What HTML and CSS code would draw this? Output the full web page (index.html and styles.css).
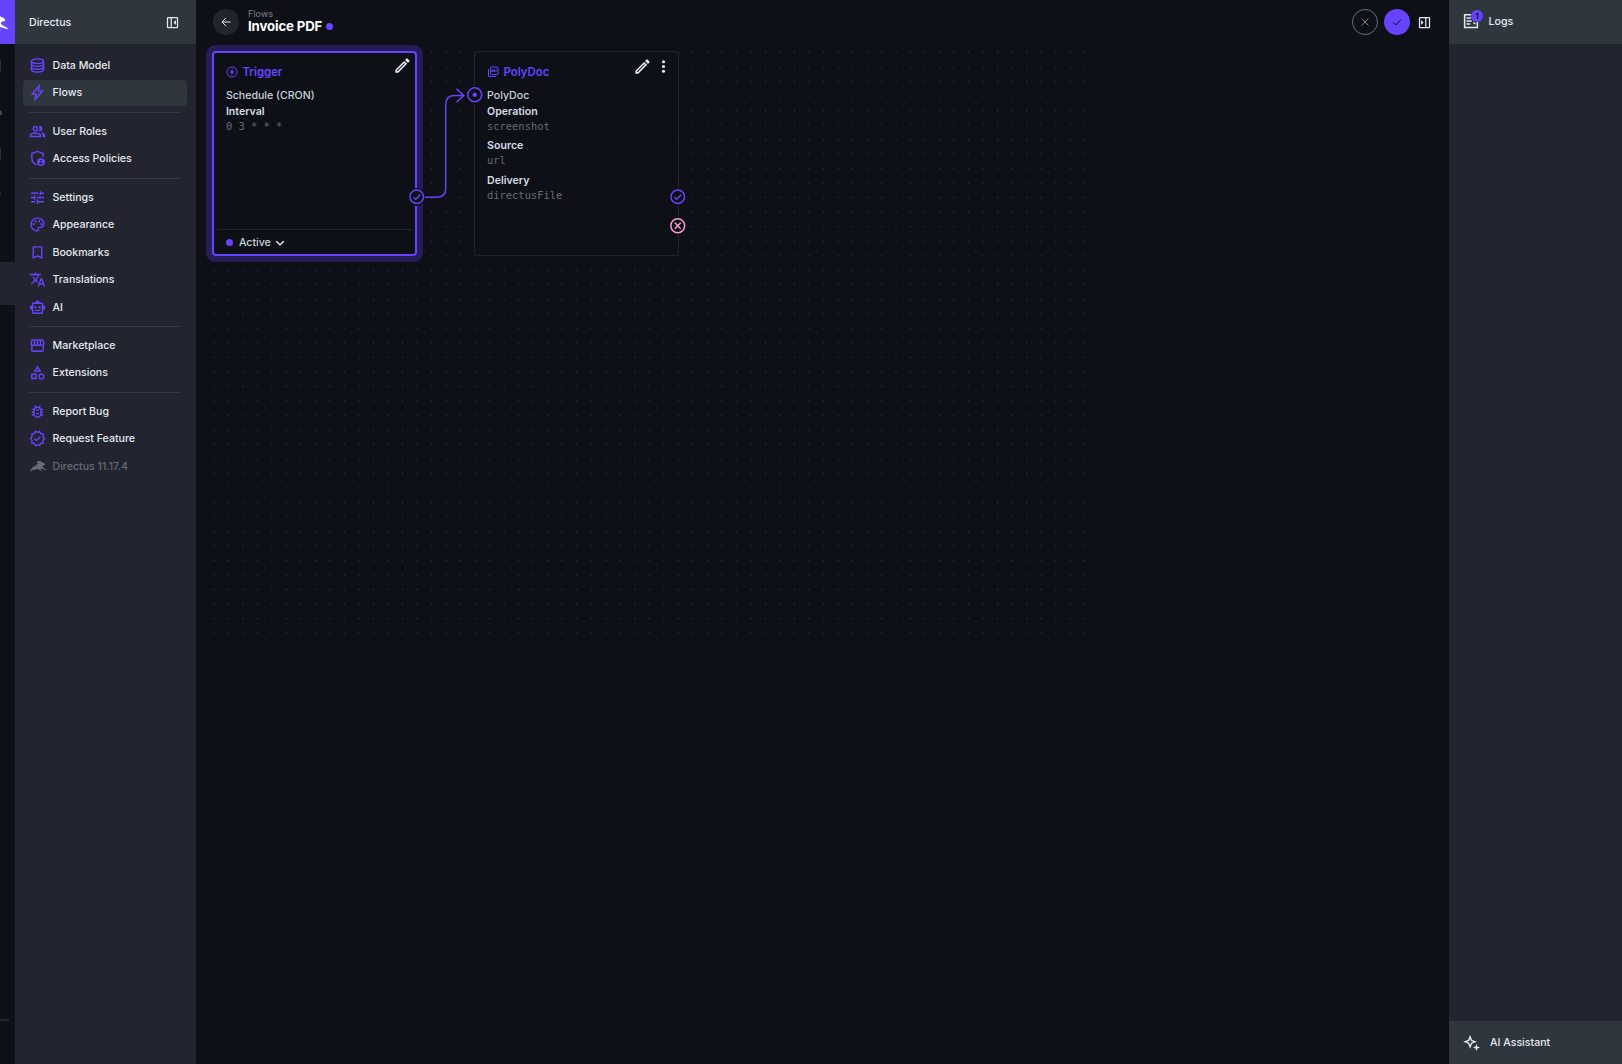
FILE: index.html
```html
<!DOCTYPE html>
<html lang="en">
<head>
    <meta charset="utf-8">
    <title>Invoice PDF</title>
    <link rel="stylesheet" href="styles.css">
</head>
<body>
<!-- shared icons -->
<svg class="defs">
    <symbol id="hare" viewBox="0 0 24 18">
        <path d="M.5 16.500c2-1.400 2.200-3.400 3.800-5.300C5.700 9.500 8 8.600 10.700 8.400L8 6.800c1.800.2 3 .1 4.200-.4L9.800 3.200c2.500-1.600 6-1.200 7.900.8l2.700 1.200c1.300.6 1.400 1.700 1 2.600l-3.200.8c-.1 1.300.2 2 1.200 2.600l4.200 2.300c.6.4.2 1-.6.9l-6-1.700c-1.600-.4-2.400.4-1.600 1.100l2.300 1.600c.4.500-.2.800-.8.600l-4.600-2.600c-1.500-.8-2.600-.5-3.800.3-1.500 1-3.200 0-4.700 1.200-.8.700-2 1.900-3.300 1.600z"/>
    </symbol>
    <symbol id="pencil" viewBox="0 0 24 24">
        <path d="M14.060 9.020l.92.92L5.920 19H5v-.92l9.060-9.060M17.660 3c-.25 0-.51.100-.7.290l-1.830 1.830 3.750 3.750 1.830-1.830c.39-.39.39-1.020 0-1.410l-2.340-2.340c-.2-.2-.45-.29-.71-.29zm-3.600 3.190L3 17.250V21h3.750L17.810 9.940l-3.750-3.750z"/>
    </symbol>
    <symbol id="accepted" viewBox="0 0 24 24">
        <circle class="line" cx="12" cy="12" r="9.300"/>
        <path class="line" d="M7.500 12.500l3 3 6.200-6.300"/>
    </symbol>
</svg>

<div class="app">
    <div class="modules">
        <a class="module logo"><svg><use href="#hare"/></svg></a>
        <a class="module"><svg viewBox="0 0 24 24"><rect class="line" x="3" y="4" width="18" height="17" rx="2"/></svg></a>
        <a class="module"><svg viewBox="0 0 24 24"><path class="line" d="M3 18v-2c3-4 16-4 19.500 0v3z"/></svg></a>
        <a class="module"><svg viewBox="0 0 24 24"><path class="line" d="M3 5h7l2 2h9v13H3z"/></svg></a>
        <a class="module"><svg viewBox="0 0 24 24"><path class="line" d="M3 18l6-6 4 4 9-8"/></svg></a>
        <a class="module blank"></a>
        <a class="module active"></a>
        <div class="modules-end"></div>
    </div>

    <div class="nav">
        <div class="nav-head">
            <span>Directus</span>
            <svg class="icon" viewBox="0 0 24 24"><rect class="line" x="4" y="4" width="16" height="16" rx="1"/><path class="line" d="M10 4v16"/><path d="M17.500 8v8L13.500 12z"/></svg>
        </div>
        <ul class="menu">
            <li>
                <svg class="icon" viewBox="0 0 24 24"><ellipse class="line" cx="12" cy="6" rx="8.500" ry="3.300"/><path class="line" d="M3.500 6v12c0 1.800 3.600 3.200 8.500 3.200s8.500-1.400 8.500-3.200V6M3.500 10c0 1.800 3.600 3.200 8.500 3.200s8.500-1.400 8.500-3.200M3.500 14c0 1.800 3.600 3.200 8.500 3.200s8.500-1.400 8.500-3.200"/></svg>
                Data Model
            </li>
            <li class="current">
                <svg class="icon" viewBox="0 0 24 24"><path class="line" d="M14.500 2.500L4.500 14H10l-1.500 8L19 10h-6z"/></svg>
                Flows
            </li>
            <li class="line-sep"></li>
            <li>
                <svg class="icon" viewBox="0 0 24 24"><path d="M16.670 13.130C18.040 14.060 19 15.320 19 17v3h4v-3c0-2.180-3.570-3.470-6.330-3.870zM15 12c2.210 0 4-1.790 4-4s-1.790-4-4-4c-.47 0-.91.100-1.330.240C14.500 5.270 15 6.580 15 8s-.5 2.730-1.330 3.760c.42.140.86.240 1.330.240zM9 12c2.210 0 4-1.790 4-4s-1.790-4-4-4-4 1.790-4 4 1.790 4 4 4zm0-6c1.100 0 2 .9 2 2s-.9 2-2 2-2-.9-2-2 .9-2 2-2zM9 13c-2.670 0-8 1.340-8 4v3h16v-3c0-2.660-5.330-4-8-4zm6 5H3v-.99C3.200 16.290 6.300 15 9 15s5.800 1.290 6 2v1z"/></svg>
                User Roles
            </li>
            <li>
                <svg class="icon" viewBox="0 0 24 24"><path class="line" d="M20 10V5l-8-3-8 3v6c0 4.700 3 8.800 7 10"/><circle cx="17" cy="17" r="5.500"/><circle class="cut" cx="17" cy="15.300" r="1.400"/><path class="cut" d="M14 19c1-2 5-2 6 0-1.500 1.800-4.500 1.800-6 0z"/></svg>
                Access Policies
            </li>
            <li class="line-sep"></li>
            <li>
                <svg class="icon" viewBox="0 0 24 24"><path d="M3 17v2h6v-2H3zM3 5v2h10V5H3zm10 16v-2h8v-2h-8v-2h-2v6h2zM7 9v2H3v2h4v2h2V9H7zm14 4v-2H11v2h10zm-6-4h2V7h4V5h-4V3h-2v6z"/></svg>
                Settings
            </li>
            <li>
                <svg class="icon" viewBox="0 0 24 24"><path d="M12 22C6.490 22 2 17.510 2 12S6.490 2 12 2s10 4.040 10 9c0 3.310-2.690 6-6 6h-1.770c-.28 0-.5.220-.5.500 0 .120.050.230.130.330.410.470.640 1.060.640 1.670 0 1.380-1.120 2.500-2.500 2.500zm0-18c-4.410 0-8 3.590-8 8s3.590 8 8 8c.28 0 .5-.22.500-.5 0-.16-.08-.28-.14-.35-.41-.46-.63-1.050-.63-1.650 0-1.380 1.120-2.500 2.500-2.500H16c2.210 0 4-1.790 4-4 0-3.860-3.590-7-8-7z"/><circle cx="6.500" cy="11.500" r="1.500"/><circle cx="9.500" cy="7.500" r="1.500"/><circle cx="14.500" cy="7.500" r="1.500"/><circle cx="17.500" cy="11.500" r="1.500"/></svg>
                Appearance
            </li>
            <li>
                <svg class="icon" viewBox="0 0 24 24"><path d="M17 3H7c-1.100 0-2 .9-2 2v16l7-3 7 3V5c0-1.100-.9-2-2-2zm0 15l-5-2.180L7 18V5h10v13z"/></svg>
                Bookmarks
            </li>
            <li>
                <svg class="icon" viewBox="0 0 24 24"><path d="M12.870 15.070l-2.540-2.510.03-.03c1.740-1.940 2.980-4.170 3.710-6.530H17V4h-7V2H8v2H1v1.990h11.170C11.500 7.920 10.440 9.750 9 11.350 8.070 10.320 7.300 9.190 6.690 8h-2c.73 1.630 1.730 3.170 2.980 4.560l-5.090 5.020L4 19l5-5 3.110 3.110.76-2.040zM18.500 10h-2L12 22h2l1.120-3h4.750L21 22h2l-4.500-12zm-2.620 7l1.620-4.330L19.120 17h-3.240z"/></svg>
                Translations
            </li>
            <li>
                <svg class="icon" viewBox="0 0 24 24"><path d="M20 9V7c0-1.100-.9-2-2-2h-3c0-1.660-1.340-3-3-3S9 3.340 9 5H6c-1.100 0-2 .9-2 2v2c-1.660 0-3 1.340-3 3s1.340 3 3 3v4c0 1.100.9 2 2 2h12c1.100 0 2-.9 2-2v-4c1.660 0 3-1.340 3-3s-1.340-3-3-3zm-2 10H6V7h12v12zM9 13c-.83 0-1.500-.67-1.500-1.500S8.170 10 9 10s1.500.67 1.500 1.500S9.830 13 9 13zm7.500-1.500c0 .83-.67 1.500-1.500 1.500s-1.500-.67-1.500-1.500.67-1.500 1.500-1.500 1.500.67 1.500 1.500zM8 15h8v2H8v-2z"/></svg>
                AI
            </li>
            <li class="line-sep"></li>
            <li>
                <svg class="icon" viewBox="0 0 24 24"><path d="M21.900 8.890l-1.050-4.370c-.22-.9-1-1.520-1.910-1.520H5.050c-.9 0-1.690.63-1.900 1.520L2.100 8.890c-.24 1.020-.02 2.060.62 2.880.08.110.19.190.28.290V19c0 1.100.9 2 2 2h14c1.100 0 2-.9 2-2v-6.940c.09-.09.2-.18.280-.28.64-.82.870-1.870.620-2.890zm-2.990-3.900l1.050 4.370c.1.420.01.840-.25 1.170-.14.180-.44.470-.94.470-.61 0-1.140-.49-1.210-1.140L16.980 5l1.930-.01zM13 5h1.960l.54 4.520c.05.390-.07.780-.33 1.070-.22.260-.54.410-.95.410-.67 0-1.220-.59-1.220-1.310V5zM8.490 9.520L9.040 5H11v4.690c0 .72-.55 1.310-1.290 1.310-.34 0-.65-.15-.89-.41-.25-.29-.37-.68-.33-1.070zm-4.450-.16L5.050 5h1.970l-.58 4.860c-.08.650-.6 1.140-1.210 1.140-.49 0-.8-.29-.93-.47-.27-.32-.36-.75-.26-1.170zM5 19v-6.030c.08.010.15.030.23.030.87 0 1.660-.36 2.240-.95.6.6 1.400.95 2.310.95.870 0 1.650-.36 2.230-.93.590.57 1.390.93 2.290.93.840 0 1.640-.35 2.240-.95.580.59 1.370.95 2.240.95.080 0 .15-.02.230-.03V19H5z"/></svg>
                Marketplace
            </li>
            <li>
                <svg class="icon" viewBox="0 0 24 24"><path d="M12 2l-5.500 9h11L12 2zm0 3.840L13.930 9h-3.870L12 5.840zM17.500 13c-2.490 0-4.500 2.010-4.500 4.500s2.010 4.500 4.500 4.500 4.500-2.010 4.500-4.500-2.010-4.500-4.500-4.500zm0 7c-1.380 0-2.500-1.120-2.500-2.500s1.120-2.500 2.500-2.500 2.500 1.120 2.500 2.500-1.120 2.500-2.500 2.500zM3 21.500h8v-8H3v8zm2-6h4v4H5v-4z"/></svg>
                Extensions
            </li>
            <li class="line-sep"></li>
            <li>
                <svg class="icon" viewBox="0 0 24 24"><path d="M20 8h-2.810c-.45-.78-1.070-1.450-1.820-1.960L17 4.410 15.590 3l-2.170 2.170C12.960 5.060 12.490 5 12 5s-.96.060-1.410.17L8.410 3 7 4.410l1.620 1.630C7.880 6.550 7.260 7.220 6.810 8H4v2h2.090c-.05.330-.09.660-.09 1v1H4v2h2v1c0 .34.040.67.090 1H4v2h2.810c1.040 1.790 2.970 3 5.190 3s4.150-1.210 5.190-3H20v-2h-2.090c.05-.33.090-.66.090-1v-1h2v-2h-2v-1c0-.34-.04-.67-.09-1H20V8zm-4 7c0 2.210-1.790 4-4 4s-4-1.790-4-4v-4c0-2.210 1.790-4 4-4s4 1.790 4 4v4z"/><path d="M10 9h4v2h-4zM10 14h4v2h-4z"/></svg>
                Report Bug
            </li>
            <li>
                <svg class="icon" viewBox="0 0 24 24"><path class="line" d="M22 12l-2.300-2.700.3-3.500-3.400-.8-1.800-3L12 3.300 9.200 2 7.400 5 4 5.800l.3 3.500L2 12l2.300 2.700-.3 3.500 3.400.8 1.800 3 2.800-1.300 2.800 1.300 1.800-3 3.400-.8-.3-3.500z"/><path class="line" d="M7.800 12.200l2.900 2.800 5.300-5.400"/></svg>
                Request Feature
            </li>
            <li class="version">
                <svg class="icon hare"><use href="#hare"/></svg>
                Directus 11.17.4
            </li>
        </ul>
    </div>

    <div class="main">
        <div class="header">
            <a class="round back"><svg viewBox="0 0 24 24"><path class="line" d="M21 12H4M12 4l-8 8 8 8"/></svg></a>
            <div class="title">
                <div class="crumb">Flows</div>
                <h1>Invoice PDF <i class="dot"></i></h1>
            </div>
            <a class="round cancel"><svg viewBox="0 0 24 24"><path class="line" d="M5 5l14 14M19 5L5 19"/></svg></a>
            <a class="round save"><svg viewBox="0 0 24 24"><path class="line" d="M4 12.500l5.500 5.500L20 7"/></svg></a>
            <svg class="icon toggle" viewBox="0 0 24 24"><rect class="line" x="4" y="4" width="16" height="16" rx="1"/><path class="line" d="M14 4v16"/><path d="M6.500 8v8l4-4z"/></svg>
        </div>

        <div class="canvas">
            <div class="panel trigger">
                <div class="tools">
                    <svg class="icon"><use href="#pencil"/></svg>
                </div>
                <div class="name">
                    <svg viewBox="0 0 24 24"><circle class="line" cx="12" cy="12" r="10"/><path d="M13 5l-5.500 8.500H11V19l5.500-8.500H13z"/></svg>
                    Trigger
                </div>
                <div class="type">Schedule (CRON)</div>
                <dl>
                    <dt>Interval</dt>
                    <dd>0 3 * * *</dd>
                </dl>
                <div class="status">
                    <i class="dot"></i>Active
                    <svg viewBox="0 0 24 24"><path class="line" d="M3 7.500l9 9 9-9"/></svg>
                </div>
            </div>

            <div class="panel operation">
                <div class="tools">
                    <svg class="icon"><use href="#pencil"/></svg>
                    <svg class="icon" viewBox="0 0 24 24"><circle cx="12" cy="6" r="2"/><circle cx="12" cy="12" r="2"/><circle cx="12" cy="18" r="2"/></svg>
                </div>
                <div class="name">
                    <svg viewBox="0 0 24 24"><rect class="line" x="7" y="2" width="15" height="15" rx="1.500"/><path class="line" d="M3 6v15h15"/><path d="M9 7h3v5H9zM13 7h3v5h-3zM17 7h3v2h-3zM17 10h2v2h-2z"/></svg>
                    PolyDoc
                </div>
                <div class="type">PolyDoc</div>
                <dl>
                    <dt>Operation</dt>
                    <dd>screenshot</dd>
                    <dt>Source</dt>
                    <dd>url</dd>
                    <dt>Delivery</dt>
                    <dd>directusFile</dd>
                </dl>
            </div>

            <svg class="arrow" viewBox="0 0 60 120"><path d="M6 109.300h14q8.700 0 8.700-8.700V16.500q0-9 9-9h8.800M39.500.8l7.300 6.700-7.300 6.800"/></svg>

            <svg class="port port-out"><use href="#accepted"/></svg>
            <svg class="port port-in" viewBox="0 0 24 24"><circle class="line" cx="12" cy="12" r="9.500"/><circle cx="12" cy="12" r="3"/></svg>
            <svg class="port port-resolve"><use href="#accepted"/></svg>
            <svg class="port port-reject" viewBox="0 0 24 24"><circle class="line" cx="12" cy="12" r="9.500"/><path class="line" d="M8 8l8 8M16 8l-8 8"/></svg>
        </div>
    </div>

    <div class="sidebar">
        <div class="section">
            <span class="logs">
                <svg class="icon" viewBox="0 0 24 24"><path class="line" d="M12 3.500H3.500v17h17V13M6 8h6M6 12h7M6 16h5M15 14l3 2"/></svg>
                <b class="badge">1</b>
            </span>
            Logs
        </div>
        <div class="section assistant">
            <svg class="icon" viewBox="0 0 24 24"><path class="line" d="M10 4l2 5 5 2-5 2-2 5-2-5-5-2 5-2z"/><path d="M19 14l1.300 3.700L24 19l-3.700 1.300L19 24l-1.300-3.700L14 19l3.700-1.300z"/></svg>
            AI Assistant
        </div>
    </div>
</div>
</body>
</html>
```

FILE: styles.css
```css
* {
    box-sizing: border-box;
}

body {
    margin: 0;
    background: #0d1117;
    color: #e4e9f0;
    font: 500 10.6px/15px Inter, sans-serif;
}

svg {
    display: block;
    flex: none;
    fill: currentColor;
}

.defs {
    position: absolute;
    width: 0;
    height: 0;
}

.line {
    fill: none;
    stroke: currentColor;
    stroke-width: 2;
}

.icon {
    width: 17px;
    height: 17px;
}

.dot {
    display: inline-block;
    width: 7px;
    height: 7px;
    border-radius: 50%;
    background: #6644ff;
}

.app {
    display: flex;
    height: 1064px;
    overflow: hidden;
}

/* module bar, scrolled mostly out of view */
.modules {
    display: flex;
    flex-direction: column;
    align-items: flex-end;
    width: 15px;
    overflow: hidden;
    color: #4d525c;
}

.module {
    display: flex;
    flex: none;
    align-items: center;
    justify-content: center;
    width: 44px;
    height: 43.5px;
}

.module svg {
    width: 18px;
    height: 18px;
}

.logo {
    height: 44px;
    background: #6644ff;
    color: #fff;
}

.logo svg {
    width: 29px;
    height: 23px;
}

.module.active {
    background: #22252f;
}

.modules-end {
    width: 29px;
    height: 2px;
    margin: auto 6px 43px 0;
    background: #21262e;
}

/* navigation */
.nav {
    width: 181px;
    background: #22252f;
}

.nav-head {
    display: flex;
    align-items: center;
    justify-content: space-between;
    height: 44px;
    padding: 0 16px 0 14px;
    background: #30363d;
}

.nav-head .icon {
    width: 15px;
    height: 15px;
}

.menu {
    margin: 0;
    padding: 8.500px 9px 0 8px;
    list-style: none;
}

.menu li {
    display: flex;
    align-items: center;
    gap: 6.500px;
    height: 25.5px;
    margin-bottom: 2px;
    padding-left: 6px;
    border-radius: 4px;
}

.menu .icon {
    color: #6644ff;
}

.menu .current {
    background: #30363d;
}

.menu .line-sep {
    height: 1px;
    margin: 6.300px 6px 5.600px 6px;
    padding: 0;
    border-radius: 0;
    background: #343a42;
}

.cut {
    fill: #22252f;
}

.menu .version,
.menu .version .icon {
    color: #676b75;
}

.menu .hare {
    width: 18px;
    height: 14px;
    margin-right: -1px;
}

/* page */
.main {
    flex: 1;
}

.header {
    display: flex;
    align-items: center;
    height: 44px;
    padding: 0 17px 0 17px;
}

.round {
    display: flex;
    align-items: center;
    justify-content: center;
    width: 26px;
    height: 26px;
    border-radius: 50%;
}

.round svg {
    width: 12px;
    height: 12px;
}

.back {
    margin-right: 9px;
    background: #21262e;
}

.title {
    flex: 1;
    padding-bottom: 1px;
}

.crumb {
    color: #6b707a;
    font-size: 9px;
    line-height: 10px;
}

h1 {
    display: flex;
    align-items: center;
    gap: 4px;
    margin: 0;
    color: #fff;
    font-size: 13.200px;
    font-weight: 700;
    letter-spacing: -0.12px;
    line-height: 15px;
}

.cancel {
    margin-right: 6px;
    border: 1.500px solid #676b75;
    color: #7c818a;
}

.save {
    margin-right: 7px;
    background: #6644ff;
    color: #0d1117;
}

.toggle {
    width: 15px;
    height: 15px;
}

/* flow canvas */
.canvas {
    position: relative;
    width: 876px;
    height: 590px;
    margin-left: 16px;
    background: radial-gradient(circle at 1.500px 1.500px, #21262e 0.700px, transparent 1.200px) 0.300px 7px / 14.520px 14.520px;
}

.panel {
    position: absolute;
    top: 7px;
    width: 205px;
    height: 205px;
    padding: 13px 12.500px;
    border: 1.500px solid #21262e;
    border-radius: 4px;
    background: #0d1117;
    color: #c9d1d9;
}

.trigger {
    left: 0.400px;
    padding: 12px 11.500px;
    border: 2px solid #6644ff;
    box-shadow: 0 0 0 6px #261c58;
}

.operation {
    left: 261.600px;
}

.tools {
    position: absolute;
    top: 4.500px;
    right: 4.500px;
    display: flex;
    gap: 2.500px;
    color: #e4e9f0;
}

.trigger .tools {
    top: 3px;
    right: 3px;
}

.tools .icon {
    width: 19px;
    height: 19px;
}

.name {
    display: flex;
    align-items: center;
    gap: 4.500px;
    height: 14px;
    color: #6644ff;
    font-size: 11.400px;
    font-weight: 600;
}

.name svg {
    width: 12px;
    height: 12px;
}

.type {
    margin-top: 8.500px;
}

dl {
    margin: 1px 0 0;
}

dt {
    color: #d6dce4;
    font-weight: 600;
}

dd {
    height: 14.500px;
    margin: 0 0 5.100px;
    color: #676b75;
    font: 10.400px/14px "DejaVu Sans Mono", monospace;
}

.status {
    position: absolute;
    right: 3px;
    bottom: 0;
    left: 3px;
    display: flex;
    align-items: center;
    height: 25px;
    padding: 1.500px 0 0 8.500px;
    border-top: 1.500px solid #21262e;
}

.status .dot {
    margin-right: 6px;
}

.status svg {
    width: 10px;
    height: 10px;
    margin-left: 4px;
}

.status .line {
    stroke-width: 3.500;
}

.arrow {
    position: absolute;
    top: 43.500px;
    left: 205px;
    width: 60px;
    height: 120px;
    fill: none;
    stroke: #6644ff;
    stroke-width: 1.500;
}

.port {
    position: absolute;
    width: 17.500px;
    height: 17.500px;
    border-radius: 50%;
    background: #0d1117;
    color: #6644ff;
}

.port-out {
    top: 144px;
    left: 195.600px;
}

.port-in {
    top: 42px;
    left: 253.600px;
}

.port-resolve {
    top: 144px;
    left: 456.600px;
}

.port-reject {
    top: 173px;
    left: 456.600px;
    color: #ff99dd;
}

/* right sidebar */
.sidebar {
    display: flex;
    flex-direction: column;
    justify-content: space-between;
    width: 173px;
    background: #22252f;
}

.section {
    display: flex;
    align-items: center;
    gap: 9px;
    height: 44px;
    padding: 0 0 1.500px 12.500px;
    background: #30363d;
}

.logs {
    position: relative;
}

.logs .icon {
    width: 18px;
    height: 18px;
}

.badge {
    position: absolute;
    top: -2.500px;
    right: -3.500px;
    width: 12px;
    height: 12px;
    border-radius: 50%;
    background: #6644ff;
    color: #0d1117;
    font-size: 8px;
    line-height: 12px;
    text-align: center;
}

.assistant {
    gap: 10px;
    height: 43px;
    padding: 0 0 0 14px;
}
```
